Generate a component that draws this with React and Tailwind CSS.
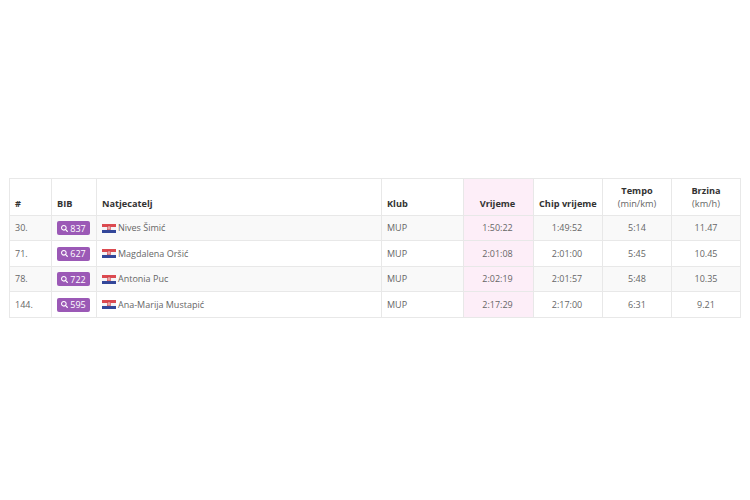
import { FaSearch } from 'react-icons/fa';

const rows = [
  { rank: '30.', bib: '837', name: 'Nives Šimić', time: '1:50:22', chip: '1:49:52', pace: '5:14', speed: '11.47', h: 'h-[25px]' },
  { rank: '71.', bib: '627', name: 'Magdalena Oršić', time: '2:01:08', chip: '2:01:00', pace: '5:45', speed: '10.45', h: 'h-[26px]' },
  { rank: '78.', bib: '722', name: 'Antonia Puc', time: '2:02:19', chip: '2:01:57', pace: '5:48', speed: '10.35', h: 'h-[25px]' },
  { rank: '144.', bib: '595', name: 'Ana-Marija Mustapić', time: '2:17:29', chip: '2:17:00', pace: '6:31', speed: '9.21', h: 'h-[26px]' },
];

function Flag() {
  return (
    <svg width="14" height="9" viewBox="0 0 14 9" className="shrink-0">
      <rect width="14" height="3" fill="#dc4a50" />
      <rect y="3" width="14" height="3" fill="#f4f4f6" />
      <rect y="6" width="14" height="3" fill="#33479a" />
      <rect x="5.5" y="2" width="3" height="3.8" fill="#e9a5a5" stroke="#c8323a" strokeWidth="0.5" />
    </svg>
  );
}

const th = 'border border-[#e8e8e8] px-[5px] py-[5px] align-bottom font-bold text-[#333333] text-[9.2px] leading-[13px] whitespace-nowrap';
const td = 'border border-[#e8e8e8] px-[5px] align-middle text-[#666666] text-[9px]';

export default function App() {
  return (
    <div className="w-[750px] h-[500px] bg-white pt-[178px] pl-[9px] font-['Open_Sans',sans-serif]">
      <table className="w-[731px] table-fixed border-collapse">
        <colgroup>
          <col className="w-[42px]" />
          <col className="w-[45px]" />
          <col className="w-[285px]" />
          <col className="w-[82px]" />
          <col className="w-[70px]" />
          <col className="w-[69px]" />
          <col className="w-[69px]" />
          <col className="w-[69px]" />
        </colgroup>
        <thead>
          <tr className="h-[37px]">
            <th className={`${th} text-left`}>#</th>
            <th className={`${th} text-left`}>BIB</th>
            <th className={`${th} text-left`}>Natjecatelj</th>
            <th className={`${th} text-left`}>Klub</th>
            <th className={`${th} text-center bg-[#fdeef8] pr-[7px]`}>Vrijeme</th>
            <th className={`${th} text-center pr-[7px]`}>Chip vrijeme</th>
            <th className={`${th} text-center`}>
              Tempo
              <br />
              <span className="font-normal text-[#666666]">(min/km)</span>
            </th>
            <th className={`${th} text-center`}>
              Brzina
              <br />
              <span className="font-normal text-[#666666]">(km/h)</span>
            </th>
          </tr>
        </thead>
        <tbody>
          {rows.map((r, i) => (
            <tr key={r.bib} className={`${r.h} ${i % 2 === 0 ? 'bg-[#f9f9f9]' : 'bg-white'}`}>
              <td className={td}>{r.rank}</td>
              <td className={td}>
                <span className="inline-flex h-[14px] w-[33px] items-center justify-center gap-[2px] rounded-[2px] bg-[#9b59b6] text-[9px] text-white align-middle">
                  <FaSearch size={7} />
                  {r.bib}
                </span>
              </td>
              <td className={td}>
                <div className="flex items-center gap-[2px]">
                  <Flag />
                  {r.name}
                </div>
              </td>
              <td className={td}>MUP</td>
              <td className={`${td} text-center bg-[#fdeef8] pr-[7px]`}>{r.time}</td>
              <td className={`${td} text-center pr-[7px]`}>{r.chip}</td>
              <td className={`${td} text-center`}>{r.pace}</td>
              <td className={`${td} text-center`}>{r.speed}</td>
            </tr>
          ))}
        </tbody>
      </table>
    </div>
  );
}
